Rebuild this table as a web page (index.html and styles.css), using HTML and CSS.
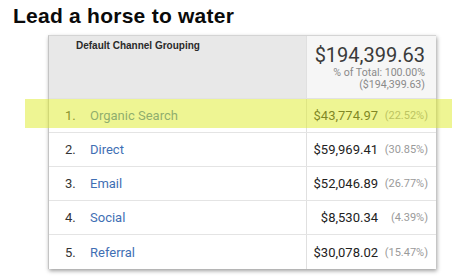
FILE: index.html
```html
<!DOCTYPE html>
<html>
<head>
<meta charset="utf-8">
<link rel="stylesheet" href="styles.css">
</head>
<body>
<h1 class="title">Lead a horse to water</h1>
<div class="report">
  <div class="head">
    <div class="head-dim">Default Channel Grouping</div>
    <div class="head-metric">
      <div class="total">$194,399.63</div>
      <div class="sub">% of Total: 100.00%</div>
      <div class="sub">($194,399.63)</div>
    </div>
  </div>
  <div class="row">
    <div class="dim"><span class="idx">1.</span><span class="label">Organic Search</span></div>
    <div class="metric"><span class="val">$43,774.97</span><span class="pct">(22.52%)</span></div>
  </div>
  <div class="row">
    <div class="dim"><span class="idx">2.</span><span class="label">Direct</span></div>
    <div class="metric"><span class="val">$59,969.41</span><span class="pct">(30.85%)</span></div>
  </div>
  <div class="row">
    <div class="dim"><span class="idx">3.</span><span class="label">Email</span></div>
    <div class="metric"><span class="val">$52,046.89</span><span class="pct">(26.77%)</span></div>
  </div>
  <div class="row">
    <div class="dim"><span class="idx">4.</span><span class="label">Social</span></div>
    <div class="metric"><span class="val">$8,530.34</span><span class="pct">(4.39%)</span></div>
  </div>
  <div class="row last">
    <div class="dim"><span class="idx">5.</span><span class="label">Referral</span></div>
    <div class="metric"><span class="val">$30,078.02</span><span class="pct">(15.47%)</span></div>
  </div>
</div>
<div class="highlight"></div>
</body>
</html>
```
FILE: styles.css
```css
html, body {
  margin: 0;
  padding: 0;
  background: #ffffff;
}
body {
  width: 468px;
  height: 276px;
  position: relative;
  overflow: hidden;
  font-family: Roboto, "Liberation Sans", sans-serif;
}
.title {
  margin: 0;
  padding: 5px 0 0 13px;
  height: 30px;
  box-sizing: border-box;
  font-family: "Liberation Sans", Arial, sans-serif;
  font-weight: bold;
  font-size: 21px;
  line-height: 22px;
  letter-spacing: 0.25px;
  color: #0a0a0a;
}
.report {
  margin: 5px 0 0 48px;
  width: 388px;
  border-top: 1px solid #d4d4d4;
  border-left: 1px solid #c4c4c4;
  box-sizing: border-box;
  background: #ffffff;
  box-shadow: 1px 2px 4px rgba(0, 0, 0, 0.38);
}
.head {
  display: flex;
  height: 62px;
  border-bottom: 1px solid #e2e2e2;
}
.head-dim {
  width: 257px;
  background: #e8e8e8;
  padding: 4px 0 0 27px;
  box-sizing: border-box;
  font-family: "Liberation Sans", Arial, sans-serif;
  font-weight: bold;
  font-size: 10px;
  color: #2a2a2a;
}
.head-metric {
  flex: 1;
  background: #f6f6f6;
  border-left: 1px solid #e0e0e0;
  padding: 8px 11px 0 0;
  text-align: right;
}
.total {
  font-size: 20px;
  line-height: 23px;
  color: #3a3a3a;
}
.sub {
  font-size: 10.6px;
  line-height: 12px;
  color: #8a8a8a;
}
.row {
  display: flex;
  height: 34px;
  border-bottom: 1px solid #e4e4e4;
  box-sizing: border-box;
  align-items: center;
  font-size: 13px;
}
.row.last {
  border-bottom: none;
}
.dim {
  width: 257px;
  height: 100%;
  display: flex;
  align-items: center;
  padding-left: 16px;
  box-sizing: border-box;
}
.idx {
  width: 25px;
  color: #333333;
}
.label {
  color: #3f6fb4;
}
.metric {
  flex: 1;
  height: 100%;
  border-left: 1px solid #e0e0e0;
  display: flex;
  align-items: center;
  justify-content: flex-end;
  padding-right: 8px;
}
.val {
  color: #222222;
  text-align: right;
}
.pct {
  width: 44px;
  text-align: right;
  font-size: 11px;
  color: #9a9a9a;
  margin-left: 6px;
}
.highlight {
  position: absolute;
  left: 25px;
  top: 99px;
  width: 427px;
  height: 29px;
  background: rgba(222, 236, 40, 0.5);
  pointer-events: none;
}
```
